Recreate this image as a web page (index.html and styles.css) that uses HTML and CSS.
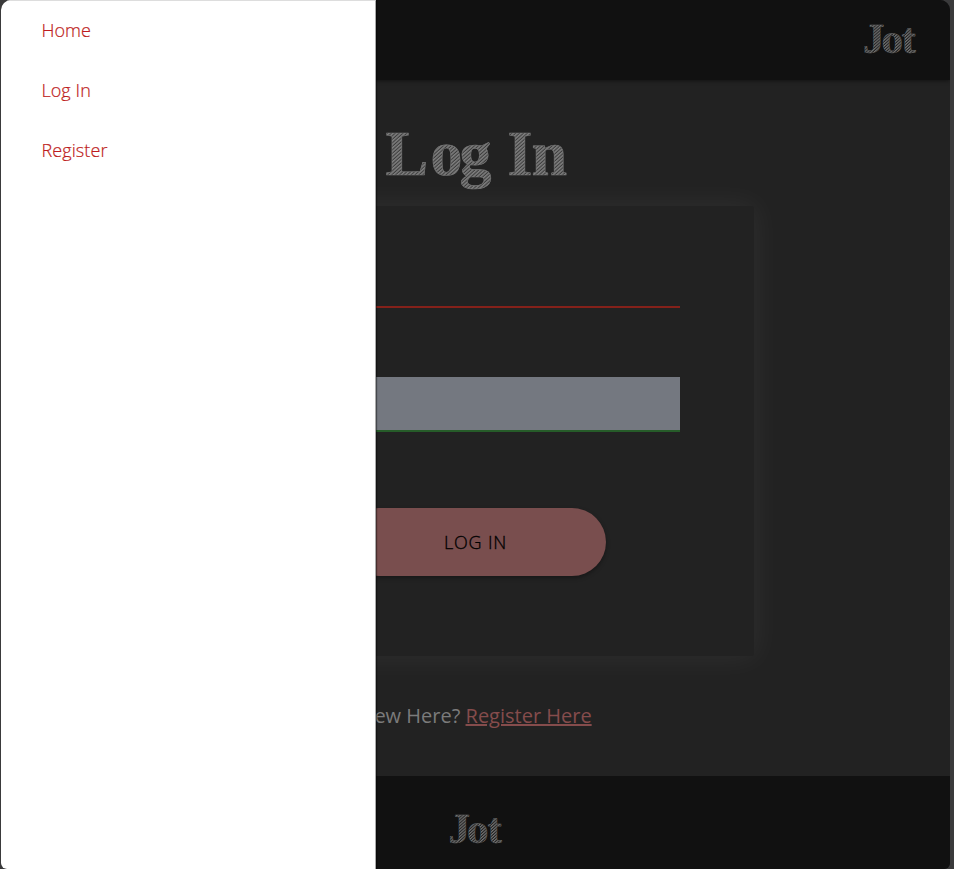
FILE: index.html
```html
<!DOCTYPE html>
<html lang="en">
<head>
<meta charset="utf-8">
<title>Jot - Log In</title>
<link rel="stylesheet" href="styles.css">
</head>
<body>
<div class="window">
  <header class="topbar">
    <svg class="logo" width="58" height="60" viewBox="-2 -7 58 60">
      <defs>
        <pattern id="hatch" width="2.6" height="9" patternUnits="userSpaceOnUse" patternTransform="rotate(48)">
          <rect width="2.6" height="9" fill="#3c3c3c"/>
          <rect width="1.5" height="9" fill="#808080"/>
        </pattern>
        <pattern id="hatch-small" width="2.2" height="7" patternUnits="userSpaceOnUse" patternTransform="rotate(48)">
          <rect width="2.2" height="7" fill="#202020"/>
          <rect width="1.1" height="7" fill="#757575"/>
        </pattern>
      </defs>
      <text class="logo-text" x="0 18.5 38.5" y="36">Jot</text>
    </svg>
  </header>
  <main class="page">
    <h1 class="title">
      <svg width="192" height="88" viewBox="-4 -8 192 88">
        <text class="title-text" x="1.5 46.5 75.5 107 123.5 147.5" y="52">Log In</text>
      </svg>
    </h1>
    <form class="card">
      <input class="field field-invalid" type="email">
      <input class="field field-filled" type="password">
      <button class="submit" type="button">LOG IN</button>
    </form>
    <p class="signup">New Here? <a href="#">Register Here</a></p>
  </main>
  <footer class="footer">
    <svg class="logo" width="58" height="60" viewBox="-2 -7 58 60">
      <text class="logo-text" x="-0.5 18 38.5" y="36">Jot</text>
    </svg>
  </footer>
  <nav class="sidenav">
    <a href="#">Home</a>
    <a href="#">Log In</a>
    <a href="#">Register</a>
  </nav>
</div>
</body>
</html>
```
FILE: styles.css
```css
* { box-sizing: border-box; }
body {
  margin: 0;
  height: 869px;
  overflow: hidden;
  background: #3a3a3b;
  font-family: "Open Sans", "Noto Sans", sans-serif;
}
.window {
  position: relative;
  display: flex;
  flex-direction: column;
  width: 949px;
  height: 869px;
  margin-left: 1px;
  overflow: hidden;
  border-radius: 10px 10px 6px 6px;
  background: #222;
}
.topbar {
  display: flex;
  justify-content: flex-end;
  height: 80px;
  padding: 10px 31px 0 0;
  background: #111;
  box-shadow: 0 1px 4px rgba(0, 0, 0, .45);
}
.logo { display: block; overflow: visible; }
.logo-text {
  font: bold 43px "Liberation Serif", serif;
  fill: url(#hatch-small);
  stroke: #6c6c6c;
  stroke-width: .4;
}
.page {
  display: flex;
  flex-direction: column;
  align-items: center;
  height: 696px;
}
.title {
  height: 88px;
  margin: 35px 0 3px;
  font-size: 64px;
  line-height: 1;
}
.title svg { display: block; overflow: visible; }
.title-text {
  font: bold 64px "Liberation Serif", serif;
  fill: url(#hatch);
  stroke: #777;
  stroke-width: .6;
}
.card {
  display: flex;
  flex-direction: column;
  align-items: center;
  width: 557px;
  height: 450px;
  padding-top: 47px;
  border-radius: 2px;
  box-shadow: 0 0 30px 3px rgba(255, 255, 255, .055);
}
.field {
  width: 409px;
  height: 55px;
  margin: 0;
  padding: 0 8px;
  border: 0;
  border-bottom: 2px solid #85211a;
  border-radius: 0;
  outline: 0;
  background: transparent;
}
.field-filled {
  margin-top: 69px;
  border-bottom-color: #265c29;
  background: #747880;
}
.submit {
  width: 261px;
  height: 68px;
  margin-top: 76px;
  padding: 0;
  border: 0;
  border-radius: 34px;
  background: #794e4e;
  color: #000;
  font: 300 18px "Open Sans", sans-serif;
  -webkit-text-stroke: .3px #000;
  letter-spacing: .8px;
  box-shadow: 0 2px 4px rgba(0, 0, 0, .35);
}
.signup {
  margin: 46px 0 0;
  color: #7b7b7b;
  font-size: 20px;
  line-height: 28px;
}
.signup a {
  color: #854c4c;
  text-decoration: underline;
  text-decoration-thickness: 2px;
}
.footer {
  display: flex;
  justify-content: center;
  height: 93px;
  padding-top: 24px;
  background: #111;
}
.sidenav {
  position: absolute;
  top: 0;
  left: 0;
  display: flex;
  flex-direction: column;
  width: 375px;
  height: 869px;
  background: #fff;
  border-top: 1px solid #ddd;
  border-right: 1px solid #aaa;
  box-shadow: 1px 0 1px rgba(0, 0, 0, .4);
}
.sidenav a {
  height: 60px;
  padding-left: 40.4px;
  color: #bd1c20;
  font-size: 18px;
  font-weight: 300;
  -webkit-text-stroke: .2px #bd1c20;
  letter-spacing: .1px;
  line-height: 58px;
  text-decoration: none;
}
```
